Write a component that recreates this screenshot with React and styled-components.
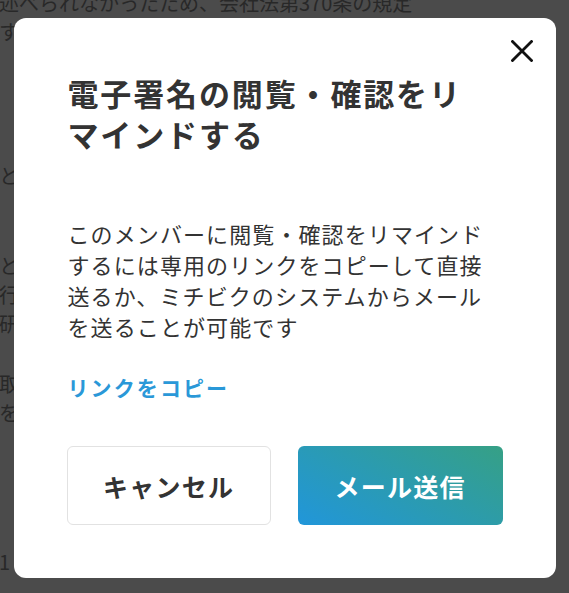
import React from 'react'
import styled, { createGlobalStyle } from 'styled-components'

const GlobalStyle = createGlobalStyle`
  html, body {
    margin: 0;
    padding: 0;
    height: 100%;
    overflow: hidden;
  }
  body {
    background: #4b4b4b;
    font-family: "Noto Sans CJK JP", "Noto Sans", sans-serif;
  }
`

const backLines = [
  { text: '述べられなかったため、会社法第370条の規定', mt: -12 },
  { text: 'するものとします。', mt: 0 },
  { text: 'とする。', mt: 115 },
  { text: 'とする。', mt: 61 },
  { text: '行うものとする。', mt: 0 },
  { text: '研修を実施する。', mt: 0 },
  { text: '取締役会は、', mt: 31 },
  { text: 'を作成する。', mt: 0 },
  { text: '1', mt: 120 },
]

export default function App() {
  return (
    <>
      <GlobalStyle />
      <Page>
        {backLines.map((l, i) => (
          <BackLine key={i} $mt={l.mt}>{l.text}</BackLine>
        ))}
      </Page>
      <Backdrop>
        <Modal role='dialog'>
          <CloseButton aria-label='閉じる'>
            <svg width='22' height='22' viewBox='0 0 22 22'>
              <path d='M1.5 1.5 L20.5 20.5 M20.5 1.5 L1.5 20.5' stroke='#111' strokeWidth='2.8' strokeLinecap='square' fill='none' />
            </svg>
          </CloseButton>
          <Title>電子署名の閲覧・確認をリマインドする</Title>
          <Body>
            このメンバーに閲覧・確認をリマインドするには専用のリンクをコピーして直接送るか、ミチビクのシステムからメールを送ることが可能です
          </Body>
          <CopyLink>リンクをコピー</CopyLink>
          <Actions>
            <Button>キャンセル</Button>
            <Button $primary>メール送信</Button>
          </Actions>
        </Modal>
      </Backdrop>
    </>
  )
}

const Page = styled.div`
  background: #4b4b4b;
  min-height: 593px;
  color: #282828;
  font-size: 20px;
  line-height: 29px;
  margin-left: -1px;
`

const BackLine = styled.div`
  margin-top: ${(p) => p.$mt}px;
  white-space: nowrap;
`

const Backdrop = styled.div`
  position: fixed;
  inset: 0;
  display: flex;
  justify-content: center;
  align-items: flex-start;
  padding-top: 18px;
`

const Modal = styled.div`
  position: relative;
  box-sizing: border-box;
  width: 542px;
  height: 560px;
  background: #fff;
  border-radius: 12px;
  padding: 54px 53px 53px 54px;
  color: #333;
`

const CloseButton = styled.button`
  position: absolute;
  top: 17px;
  right: 18px;
  width: 32px;
  height: 32px;
  display: flex;
  align-items: center;
  justify-content: center;
  padding: 0;
  border: none;
  background: transparent;
  cursor: pointer;
`

const Title = styled.h2`
  margin: 0;
  max-width: 405px;
  font-size: 31px;
  font-weight: 700;
  line-height: 41px;
  letter-spacing: 0.06em;
  color: #333;
`

const Body = styled.p`
  margin: 64px 0 0;
  width: 430px;
  font-size: 22px;
  font-weight: 400;
  line-height: 31px;
  letter-spacing: 0.05em;
  color: #333;
`

const CopyLink = styled.a`
  display: block;
  margin-top: 30px;
  font-size: 21px;
  font-weight: 700;
  line-height: 30px;
  letter-spacing: 0.1em;
  color: #2a98d8;
  cursor: pointer;
`

const Actions = styled.div`
  display: flex;
  gap: 27px;
  margin-top: 44px;
  margin-left: -1px;
`

const Button = styled.button`
  width: 205px;
  height: 79px;
  box-sizing: border-box;
  border-radius: 6px;
  font-family: "Noto Sans CJK JP", "Noto Sans", sans-serif;
  font-size: 25px;
  font-weight: 700;
  letter-spacing: 0.05em;
  cursor: pointer;
  border: ${(p) => (p.$primary ? 'none' : '1px solid #e2e2e2')};
  background: ${(p) =>
    p.$primary ? 'linear-gradient(30deg, #2196da 0%, #2b9bb0 50%, #36a085 100%)' : '#fff'};
  color: ${(p) => (p.$primary ? '#fff' : '#333')};
`
